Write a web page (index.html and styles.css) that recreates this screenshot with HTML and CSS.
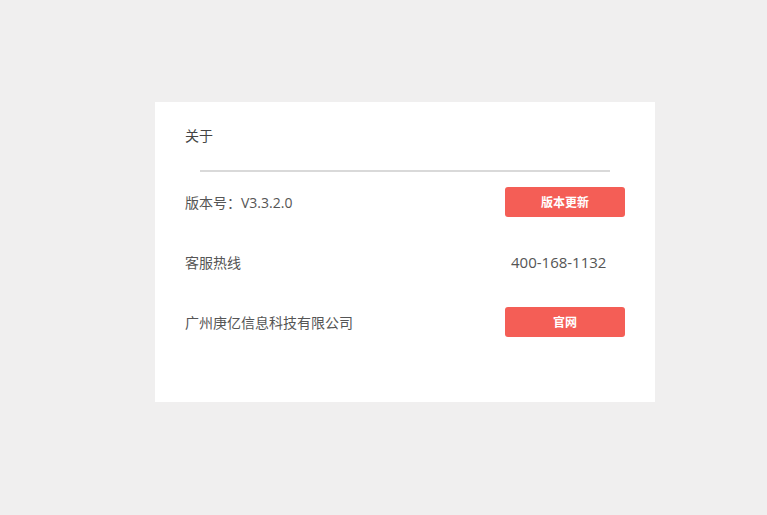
FILE: index.html
```html
<!DOCTYPE html>
<html lang="zh-CN">
<head>
<meta charset="UTF-8">
<meta name="viewport" content="width=device-width, initial-scale=1.0">
<title>关于</title>
<link rel="stylesheet" href="styles.css">
</head>
<body>
    <div class="about">
        <h2 class="about-title">关于</h2>
        <div class="line"></div>
        <div class="about-row">
            <span class="label">版本号：V3.3.2.0</span>
            <button class="btn">版本更新</button>
        </div>
        <div class="about-row">
            <span class="label">客服热线</span>
            <span class="value">400-168-1132</span>
        </div>
        <div class="about-row">
            <span class="label">广州庚亿信息科技有限公司</span>
            <button class="btn">官网</button>
        </div>
    </div>
</body>
</html>
```

FILE: styles.css
```css
body {
    font-family: "Open Sans", "Noto Sans CJK SC", sans-serif;
    margin: 0;
    padding: 102px 0 0 155px;
    background-color: #f0efef;
    color: #555;
}

.about {
    width: 500px;
    height: 300px;
    box-sizing: border-box;
    padding: 24px 30px 0 30px;
    background-color: #fff;
}

.about-title {
    margin: 0 0 24px 0;
    font-size: 14px;
    font-weight: normal;
    line-height: 20px;
    color: #444;
}

.line {
    height: 2px;
    margin: 0 15px;
    background-color: #d9d9d9;
}

.about-row {
    display: flex;
    justify-content: space-between;
    align-items: center;
    height: 60px;
}

.label {
    font-size: 14px;
}

.value {
    width: 120px;
    padding-left: 6px;
    box-sizing: border-box;
    font-size: 15px;
}

.btn {
    width: 120px;
    height: 30px;
    border: none;
    border-radius: 3px;
    background-color: #f45e56;
    color: #fff;
    font-family: inherit;
    font-size: 12px;
    font-weight: bold;
    cursor: pointer;
}

.btn:hover {
    background-color: #e5524a;
}
```
